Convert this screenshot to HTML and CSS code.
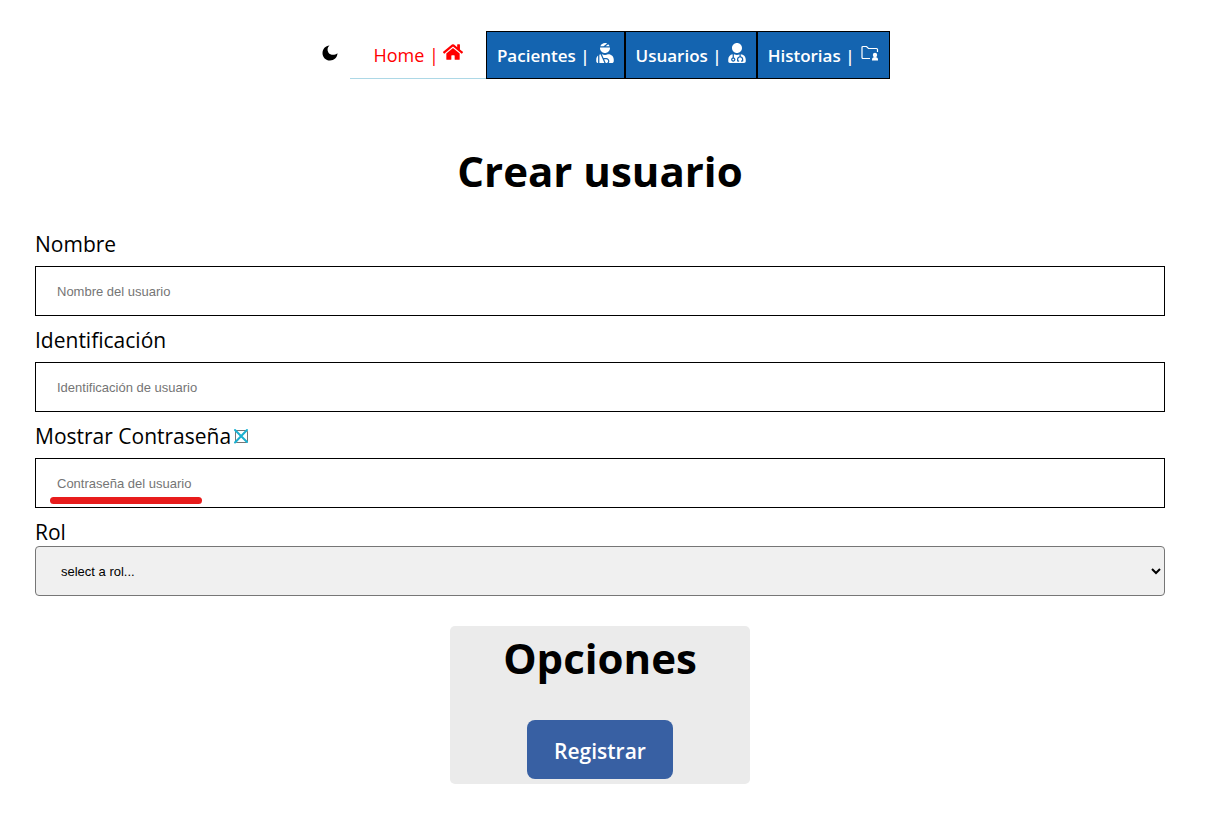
FILE: index.html
```html
<!DOCTYPE html>
<html lang="es">
<head>
<meta charset="utf-8">
<title>Crear usuario</title>
<link rel="stylesheet" href="styles.css">
</head>
<body>
<nav class="nav">
  <button class="theme" type="button" aria-label="Modo oscuro">
    <svg class="moon" viewBox="0 0 16 16"><path d="M7.500.5C5.300 2 4.900 5.300 6.500 7.700c1.800 2.500 5.800 3 9 .6C15.300 12.600 12 15.500 8 15.500 3.800 15.500.5 12.200.5 8.200.5 4 3.500.7 7.500.5z"/></svg>
  </button>
  <a class="link home" href="#">Home |
    <svg class="icon house" viewBox="0 0 576 512"><path d="M280.37 148.26L96 300.11V464a16 16 0 0 0 16 16l112.06-.29a16 16 0 0 0 15.92-16V368a16 16 0 0 1 16-16h64a16 16 0 0 1 16 16v95.64a16 16 0 0 0 16 16.05L464 480a16 16 0 0 0 16-16V300L295.67 148.26a12.19 12.19 0 0 0-15.3 0zM571.6 251.47L488 182.56V44.05a12 12 0 0 0-12-12h-56a12 12 0 0 0-12 12v72.61L318.47 43a48 48 0 0 0-61 0L4.34 251.47a12 12 0 0 0-1.6 16.9l25.5 31A12 12 0 0 0 45.15 301l235.22-193.74a12.19 12.19 0 0 1 15.3 0L530.9 301a12 12 0 0 0 16.9-1.6l25.5-31a12 12 0 0 0-1.7-16.93z"/></svg>
  </a>
  <a class="link tab" href="#">Pacientes |
    <svg class="icon" viewBox="0 0 448 512"><path d="M277.37 11.98C261.08 4.47 243.11 0 224 0c-53.69 0-99.5 33.13-118.51 80h81.19l90.69-68.02zM342.51 80c-7.9-19.47-20.67-36.2-36.49-49.52L239.99 80h102.52zM224 256c70.69 0 128-57.31 128-128 0-5.48-.95-10.7-1.61-16H97.61c-.67 5.3-1.61 10.52-1.61 16 0 70.69 57.31 128 128 128zM80 299.7V512h128.26l-98.45-221.52A132.835 132.835 0 0 0 80 299.7zM0 464c0 26.51 21.49 48 48 48V320.24C18.88 344.89 0 381.26 0 422.4V464zm256-48h-55.38l42.67 96H256c26.47 0 48-21.53 48-48s-21.53-48-48-48zm57.6-128h-16.71c-22.24 10.18-46.88 16-72.89 16s-50.65-5.82-72.89-16h-7.37l42.67 96H256c44.11 0 80 35.89 80 80 0 18.08-6.26 34.59-16.41 48H400c26.51 0 48-21.49 48-48v-41.6c0-74.23-60.17-134.4-134.4-134.4z"/></svg>
  </a>
  <a class="link tab" href="#">Usuarios |
    <svg class="icon" viewBox="0 0 448 512"><path d="M224 256c70.7 0 128-57.3 128-128S294.7 0 224 0 96 57.3 96 128s57.3 128 128 128zM104 424c0 13.3 10.7 24 24 24s24-10.7 24-24-10.7-24-24-24-24 10.700-24 24zm216-135.400v49c36.500 7.400 64 39.800 64 78.400v41.700c0 7.600-5.400 14.200-12.900 15.700l-32.200 6.400c-4.300.9-8.500-1.900-9.400-6.300l-3.100-15.700c-.9-4.300 1.900-8.600 6.300-9.400l19.300-3.900V416c0-62.800-96-65.100-96 1.900v26.700l19.300 3.900c4.300.9 7.100 5.100 6.300 9.400l-3.100 15.700c-.9 4.300-5.100 7.100-9.400 6.300l-31.200-4.200c-7.900-1.100-13.800-7.800-13.800-15.900V416c0-38.600 27.500-70.900 64-78.400v-45.200c-2.200.7-4.400 1.100-6.600 1.900-18 6.300-37.300 9.800-57.400 9.800s-39.400-3.500-57.400-9.800c-7.400-2.600-14.900-4.200-22.600-5.200v81.600c23.100 6.900 40 28.100 40 53.400 0 30.900-25.100 56-56 56s-56-25.100-56-56c0-25.300 16.900-46.500 40-53.400v-80.400C48.500 301 0 355.800 0 422.400v44.800C0 491.900 20.100 512 44.800 512h358.400c24.700 0 44.800-20.100 44.800-44.800v-44.800c0-72-56.800-130.300-128-133.800z"/></svg>
  </a>
  <a class="link tab" href="#">Historias |
    <svg class="icon" viewBox="0 0 18 20"><path d="M9 15.500H2a1 1 0 0 1-1-1V4.500a1 1 0 0 1 1-1h3.500l2 2H15.500a1 1 0 0 1 1 1V9" fill="none" stroke="currentColor" stroke-width="1.200"/><circle cx="14" cy="12" r="2.200"/><path d="M11 17.500v-1c0-1.500 1-2.500 3-2.500s3 1 3 2.500v1z"/></svg>
  </a>
</nav>
<main>
  <h1 class="title">Crear usuario</h1>
  <form class="form">
    <div class="field">
      <label class="label" for="nombre">Nombre</label>
      <input class="control" id="nombre" type="text" placeholder="Nombre del usuario">
    </div>
    <div class="field">
      <label class="label" for="ident">Identificación</label>
      <input class="control" id="ident" type="text" placeholder="Identificación de usuario">
    </div>
    <div class="field">
      <div class="label row">
        <label for="mostrar">Mostrar Contraseña</label>
        <span class="check"><input class="box" id="mostrar" type="checkbox"><svg class="cross" viewBox="0 0 16 16"><path d="M2 2l12 12M14 2L2 14.500"/></svg></span>
      </div>
      <div class="marked">
        <input class="control" type="password" aria-label="Contraseña" placeholder="Contraseña del usuario">
        <span class="underline"></span>
      </div>
    </div>
    <div class="field">
      <label class="label tight" for="rol">Rol</label>
      <select class="control select" id="rol"><option>select a rol...</option></select>
    </div>
    <section class="options">
      <h2 class="title">Opciones</h2>
      <button class="submit" type="button">Registrar</button>
    </section>
  </form>
</main>
</body>
</html>
```
FILE: styles.css
```css
* { box-sizing: border-box; }
body {
  margin: 0;
  padding: 31px 50px 36px 35px;
  background: #fff;
  color: #000;
  font-family: "Segoe UI", "Open Sans", sans-serif;
}
.nav { display: flex; justify-content: center; height: 48px; padding-left: 12px; }
.theme {
  display: flex;
  padding: 14px 12px 0 0;
  border: 0;
  background: none;
}
.moon { width: 16px; height: 16px; }
.link {
  display: flex;
  align-items: center;
  gap: 6px;
  padding: 1px 10px 0;
  font-size: 17px;
  font-weight: 600;
  white-space: nowrap;
  text-decoration: none;
}
.home {
  gap: 4px;
  padding: 1px 23px 0;
  border-bottom: 1px solid lightblue;
  color: #f00;
  font-size: 18px;
  font-weight: 500;
}
.tab { border: 1px solid #000; background: #1464b0; color: #fff; }
.icon { width: 18px; height: 20px; margin-bottom: 6px; fill: currentColor; }
.house { width: 20px; }
.title {
  margin: 0;
  font-size: 42px;
  font-weight: 700;
  line-height: 60px;
  text-align: center;
}
main > .title { padding: 62px 0 28px; }
.form { display: flex; flex-direction: column; }
.label { display: block; height: 37px; font-size: 21px; font-weight: 400; line-height: 30px; }
.field { padding-bottom: 9px; }
.row { display: flex; align-items: center; gap: 2px; padding-bottom: 7px; }
.tight { height: 29px; }
.check { position: relative; width: 16px; height: 16px; padding: 2px; }
.box {
  display: block;
  width: 13px;
  height: 13px;
  margin: 0;
  border: 1px solid #767676;
  border-radius: 2px;
  appearance: none;
}
.cross {
  position: absolute;
  inset: 0;
  fill: none;
  stroke: #1ab0d0;
  stroke-width: 2;
  stroke-linecap: round;
  pointer-events: none;
}
.control {
  display: block;
  width: 100%;
  height: 50px;
  padding: 0 21px;
  border: 1px solid #000;
  background: #fff;
  font-family: "Liberation Sans", Arial, sans-serif;
  font-size: 13px;
}
.control::placeholder { color: #757575; }
.select { border-color: #767676; border-radius: 4px; background: #f0f0f0; padding: 0 1px 0 21px; color: #000; }
.marked { position: relative; }
.underline {
  position: absolute;
  left: 15px;
  bottom: 4px;
  width: 152px;
  height: 7px;
  border-radius: 4px;
  background: #e81c1c;
}
.options {
  display: flex;
  flex-direction: column;
  align-items: center;
  gap: 32px;
  width: 300px;
  margin: 21px auto 0;
  padding: 2px 5px 5px;
  border-radius: 5px;
  background: #ebebeb;
}
.submit {
  padding: 2px 27px 0;
  height: 59px;
  border: 0;
  border-radius: 8px;
  background: #3860a3;
  color: #fff;
  font: 600 21px "Segoe UI", "Open Sans", sans-serif;
}
```
